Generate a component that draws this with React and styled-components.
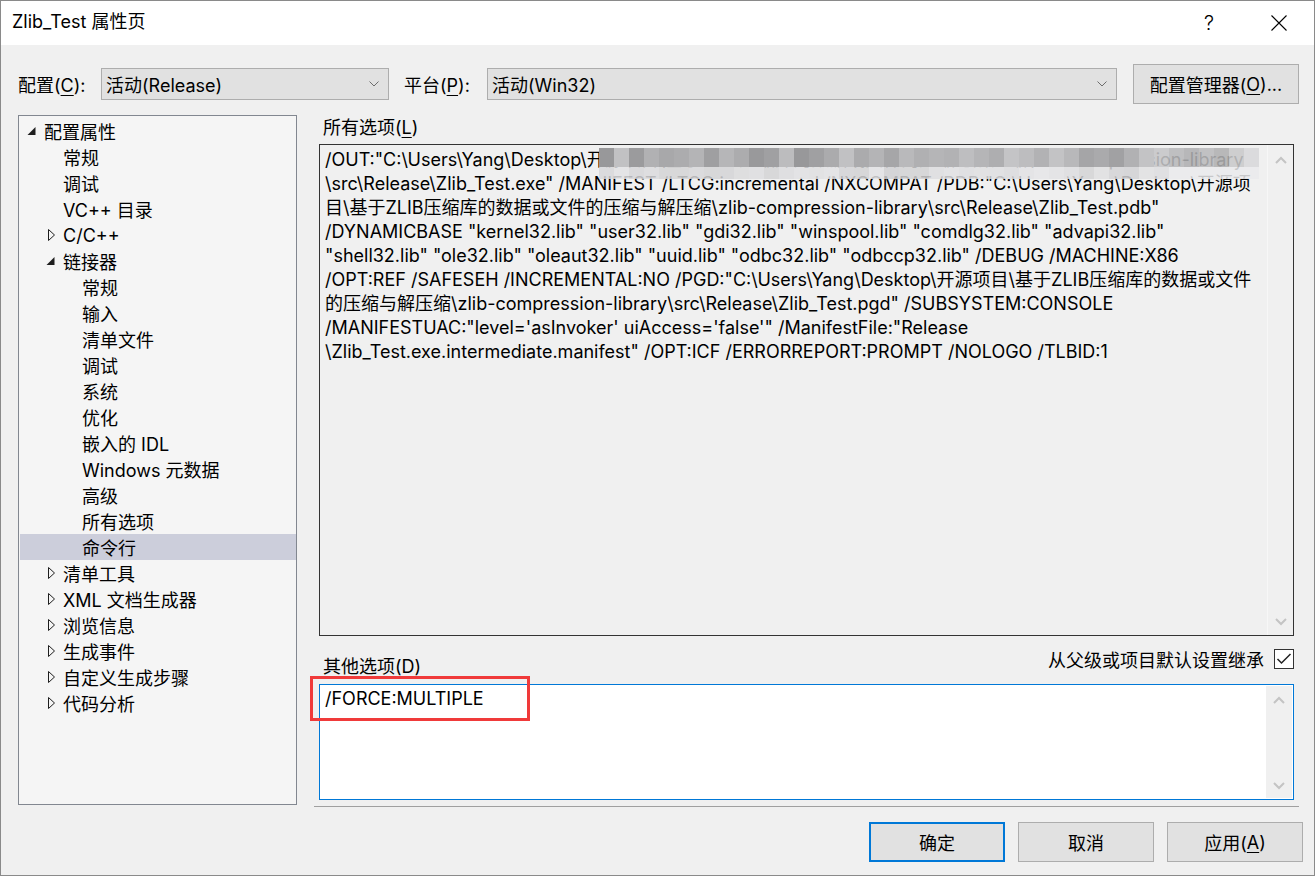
import React from "react";
import styled, { createGlobalStyle } from "styled-components";

const GlobalStyle = createGlobalStyle`
  html, body {
    margin: 0;
    padding: 0;
    background: #f0f0f0;
  }
  body {
    font-family: Inter, "Noto Sans CJK SC", sans-serif;
    font-size: 18px;
    color: #000;
  }
  * { box-sizing: border-box; }
`;

const Window = styled.div`
  width: 1315px;
  height: 876px;
  border: 1px solid #8a8a8a;
  display: flex;
  flex-direction: column;
  background: #f0f0f0;
  overflow: hidden;
`;

const TitleBar = styled.div`
  height: 44px;
  flex-shrink: 0;
  background: #fff;
  display: flex;
  align-items: center;
  padding-left: 11px;
`;

const Title = styled.div`
  flex: 1;
  line-height: 24px;
  margin-top: -2px;
`;

const CaptionButton = styled.div`
  width: 70px;
  height: 44px;
  display: flex;
  align-items: center;
  justify-content: center;
  font-size: 20px;
  font-weight: 300;
`;

const Body = styled.div`
  flex: 1;
  display: flex;
  flex-direction: column;
  padding: 19px 11px 13px 17px;
`;

const ConfigRow = styled.div`
  display: flex;
  align-items: center;
  height: 40px;
  margin-right: 4px;
`;

const FieldLabel = styled.div`
  width: 83px;
  flex-shrink: 0;
  margin-left: ${p => p.$offset || 0}px;
  white-space: nowrap;
`;

const Mn = styled.span`
  text-decoration: underline;
  text-underline-offset: 3px;
  text-decoration-thickness: 1px;
`;

const Select = styled.div`
  width: ${p => (p.$width ? `${p.$width}px` : "auto")};
  flex: ${p => (p.$width ? "none" : 1)};
  height: 32px;
  background: #e1e1e1;
  border: 1px solid #adadad;
  display: flex;
  align-items: center;
  padding: 0 9px 0 4px;
  white-space: nowrap;
`;

const SelectText = styled.span`
  flex: 1;
`;

const PushButton = styled.div`
  width: ${p => p.$width}px;
  height: 40px;
  flex-shrink: 0;
  margin-left: ${p => p.$gap || 0}px;
  background: #e1e1e1;
  border: ${p => (p.$default ? "2px solid #0078d7" : "1px solid #adadad")};
  display: flex;
  align-items: center;
  justify-content: center;
  white-space: nowrap;
`;

const Main = styled.div`
  display: flex;
  gap: 17px;
  height: 692px;
  margin-top: 11px;
  margin-right: 4px;
`;

const Tree = styled.div`
  width: 279px;
  height: 690px;
  flex-shrink: 0;
  border: 1px solid #828790;
  background: #f5f5f5;
  padding-top: 2px;
`;

const TreeRow = styled.div`
  height: 26px;
  display: flex;
  align-items: center;
  margin-left: ${p => (p.$selected ? 1 : 0)}px;
  padding-left: ${p => 8 + p.$level * 19 - (p.$selected ? 1 : 0)}px;
  background: ${p => (p.$selected ? "#cccedb" : "transparent")};
  white-space: nowrap;
`;

const Expander = styled.span`
  width: 17px;
  height: 26px;
  flex-shrink: 0;
  display: flex;
  align-items: center;
`;

const RightPanel = styled.div`
  flex: 1;
  display: flex;
  flex-direction: column;
  border-bottom: 1px solid #a0a0a0;
`;

const SectionLabel = styled.div`
  height: 29px;
  line-height: 26px;
  padding-left: 9px;
`;

const TextBox = styled.div`
  position: relative;
  margin: 0 5px;
  height: ${p => p.$height}px;
  flex-shrink: 0;
  display: flex;
  background: ${p => (p.$readOnly ? "#f0f0f0" : "#fff")};
  border: 1px solid ${p => (p.$readOnly ? "#333" : "#0078d7")};
`;

const TextContent = styled.div`
  position: relative;
  flex: 1;
  overflow: hidden;
  padding: ${p => p.$padTop}px 0 0 5px;
  line-height: 24px;
`;

const TextLine = styled.div`
  white-space: pre;
  height: 24px;
`;

/* pixelated patch hiding part of the first path */
const Mosaic = styled.div`
  position: absolute;
  left: 279px;
  top: 3px;
  display: grid;
  grid-template-columns: repeat(44, 15px);
  grid-template-rows: 19px 12px;
`;

const MosaicCell = styled.div`
  background: ${p => p.$color};
  opacity: ${p => p.$alpha};
`;

const ScrollBar = styled.div`
  width: 26px;
  flex-shrink: 0;
  margin: ${p => (p.$readOnly ? 0 : "1px")};
  background: #f0f0f0;
  border-left: ${p => (p.$readOnly ? "1px solid #f7f7f7" : "none")};
  display: flex;
  flex-direction: column;
  justify-content: space-between;
  align-items: center;
  padding: ${p => (p.$readOnly ? "11px 0 9px" : "10px 0 8px")};
`;

const OtherRow = styled.div`
  height: 48px;
  flex-shrink: 0;
  display: flex;
  align-items: flex-start;
  padding-right: 5px;
`;

const OtherLabel = styled.div`
  padding: 19px 0 0 9px;
  line-height: 24px;
  flex: 1;
`;

const InheritGroup = styled.div`
  display: flex;
  align-items: center;
  gap: 10px;
  height: 22px;
  margin-top: 12px;
`;

const CheckBox = styled.div`
  width: 20px;
  height: 20px;
  border: 1px solid #333;
  background: #fff;
  display: flex;
  align-items: center;
  justify-content: center;
`;

const Highlight = styled.div`
  position: absolute;
  left: -10px;
  top: -9px;
  width: 220px;
  height: 45px;
  border: 3px solid #f03a3a;
  pointer-events: none;
`;

const ButtonRow = styled.div`
  display: flex;
  justify-content: flex-end;
  margin-top: 15px;
`;

const ChevronSmall = () => (
  <svg width="10" height="6" viewBox="0 0 10 6">
    <polyline points="0.5,0.5 5,5 9.5,0.5" fill="none" stroke="#6d6d6d" strokeWidth="1" />
  </svg>
);

const ScrollArrow = ({ up }) => (
  <svg width="12" height="8" viewBox="0 0 12 8">
    <polyline
      points={up ? "1,7 6,2 11,7" : "1,1 6,6 11,1"}
      fill="none"
      stroke="#c4c4c4"
      strokeWidth="2"
    />
  </svg>
);

const ExpandedIcon = () => (
  <svg width="9" height="8" viewBox="0 0 9 8">
    <polygon points="8.5,0 8.5,8 0.5,8" fill="#1e1e1e" />
  </svg>
);

const CollapsedIcon = () => (
  <svg width="9" height="12" viewBox="0 0 9 12" style={{ marginLeft: 2 }}>
    <polygon points="0.5,0.5 6.5,6 0.5,11.5" fill="none" stroke="#1e1e1e" strokeWidth="1" />
  </svg>
);

const treeItems = [
  { label: "配置属性", level: 0, state: "open" },
  { label: "常规", level: 1 },
  { label: "调试", level: 1 },
  { label: "VC++ 目录", level: 1 },
  { label: "C/C++", level: 1, state: "closed" },
  { label: "链接器", level: 1, state: "open" },
  { label: "常规", level: 2 },
  { label: "输入", level: 2 },
  { label: "清单文件", level: 2 },
  { label: "调试", level: 2 },
  { label: "系统", level: 2 },
  { label: "优化", level: 2 },
  { label: "嵌入的 IDL", level: 2 },
  { label: "Windows 元数据", level: 2 },
  { label: "高级", level: 2 },
  { label: "所有选项", level: 2 },
  { label: "命令行", level: 2, selected: true },
  { label: "清单工具", level: 1, state: "closed" },
  { label: "XML 文档生成器", level: 1, state: "closed" },
  { label: "浏览信息", level: 1, state: "closed" },
  { label: "生成事件", level: 1, state: "closed" },
  { label: "自定义生成步骤", level: 1, state: "closed" },
  { label: "代码分析", level: 1, state: "closed" },
];

const firstLine = '/OUT:"C:\\Users\\Yang\\Desktop\\开源项目\\基于ZLIB压缩库的数据或文件的压缩与解压缩\\zlib-compression-library';

const commandLines = [
  '\\src\\Release\\Zlib_Test.exe" /MANIFEST /LTCG:incremental /NXCOMPAT /PDB:"C:\\Users\\Yang\\Desktop\\开源项',
  '目\\基于ZLIB压缩库的数据或文件的压缩与解压缩\\zlib-compression-library\\src\\Release\\Zlib_Test.pdb"',
  '/DYNAMICBASE "kernel32.lib" "user32.lib" "gdi32.lib" "winspool.lib" "comdlg32.lib" "advapi32.lib"',
  '"shell32.lib" "ole32.lib" "oleaut32.lib" "uuid.lib" "odbc32.lib" "odbccp32.lib" /DEBUG /MACHINE:X86',
  '/OPT:REF /SAFESEH /INCREMENTAL:NO /PGD:"C:\\Users\\Yang\\Desktop\\开源项目\\基于ZLIB压缩库的数据或文件',
  '的压缩与解压缩\\zlib-compression-library\\src\\Release\\Zlib_Test.pgd" /SUBSYSTEM:CONSOLE',
  "/MANIFESTUAC:\"level='asInvoker' uiAccess='false'\" /ManifestFile:\"Release",
  '\\Zlib_Test.exe.intermediate.manifest" /OPT:ICF /ERRORREPORT:PROMPT /NOLOGO /TLBID:1',
];

// deterministic greys for the mosaic
const mosaicCells = Array.from({ length: 88 }, (_, i) => {
  const col = i % 44;
  const row = Math.floor(i / 44);
  const n = Math.abs(Math.sin(i * 12.9898) * 43758.5453) % 1;
  let v = row === 0 ? 152 + Math.round(n * 44) : 208 + Math.round(n * 22);
  if (col > 36) v += (col - 36) * 4;
  v = Math.min(v, 234);
  const alpha = row === 0 ? (col > 36 ? 0.88 : 1) : 0.85;
  return { color: `rgb(${v},${v},${v + 2})`, alpha };
});

export default function App() {
  return (
    <>
      <GlobalStyle />
      <Window>
        <TitleBar>
          <Title>Zlib_Test 属性页</Title>
          <CaptionButton>?</CaptionButton>
          <CaptionButton>
            <svg width="16" height="16" viewBox="0 0 16 16">
              <path d="M0.5 0.5 L15.5 15.5 M15.5 0.5 L0.5 15.5" stroke="#000" strokeWidth="1.1" />
            </svg>
          </CaptionButton>
        </TitleBar>

        <Body>
          <ConfigRow>
            <FieldLabel>
              配置(<Mn>C</Mn>):
            </FieldLabel>
            <Select $width={288}>
              <SelectText>活动(Release)</SelectText>
              <ChevronSmall />
            </Select>
            <FieldLabel $offset={15}>
              平台(<Mn>P</Mn>):
            </FieldLabel>
            <Select>
              <SelectText>活动(Win32)</SelectText>
              <ChevronSmall />
            </Select>
            <PushButton $width={166} $gap={16}>
              配置管理器(<Mn>O</Mn>)...
            </PushButton>
          </ConfigRow>

          <Main>
            <Tree>
              {treeItems.map((item, i) => (
                <TreeRow key={i} $level={item.level} $selected={item.selected}>
                  <Expander>
                    {item.state === "open" && <ExpandedIcon />}
                    {item.state === "closed" && <CollapsedIcon />}
                  </Expander>
                  {item.label}
                </TreeRow>
              ))}
            </Tree>

            <RightPanel>
              <SectionLabel>
                所有选项(<Mn>L</Mn>)
              </SectionLabel>
              <TextBox $height={492} $readOnly>
                <TextContent $padTop={3}>
                  <TextLine>{firstLine}</TextLine>
                  {commandLines.map((line, i) => (
                    <TextLine key={i}>{line}</TextLine>
                  ))}
                  <Mosaic>
                    {mosaicCells.map((c, i) => (
                      <MosaicCell key={i} $color={c.color} $alpha={c.alpha} />
                    ))}
                  </Mosaic>
                </TextContent>
                <ScrollBar $readOnly>
                  <ScrollArrow up />
                  <ScrollArrow />
                </ScrollBar>
              </TextBox>

              <OtherRow>
                <OtherLabel>其他选项(D)</OtherLabel>
                <InheritGroup>
                  从父级或项目默认设置继承
                  <CheckBox>
                    <svg width="16" height="14" viewBox="0 0 16 14">
                      <polyline points="1.5,7 5.5,11 14.5,2" fill="none" stroke="#222" strokeWidth="1.5" />
                    </svg>
                  </CheckBox>
                </InheritGroup>
              </OtherRow>

              <TextBox $height={116}>
                <TextContent $padTop={2}>
                  <TextLine>/FORCE:MULTIPLE</TextLine>
                </TextContent>
                <ScrollBar>
                  <ScrollArrow up />
                  <ScrollArrow />
                </ScrollBar>
                <Highlight />
              </TextBox>
            </RightPanel>
          </Main>

          <ButtonRow>
            <PushButton $width={136} $default>
              确定
            </PushButton>
            <PushButton $width={136} $gap={13}>
              取消
            </PushButton>
            <PushButton $width={136} $gap={13}>
              应用(<Mn>A</Mn>)
            </PushButton>
          </ButtonRow>
        </Body>
      </Window>
    </>
  );
}
